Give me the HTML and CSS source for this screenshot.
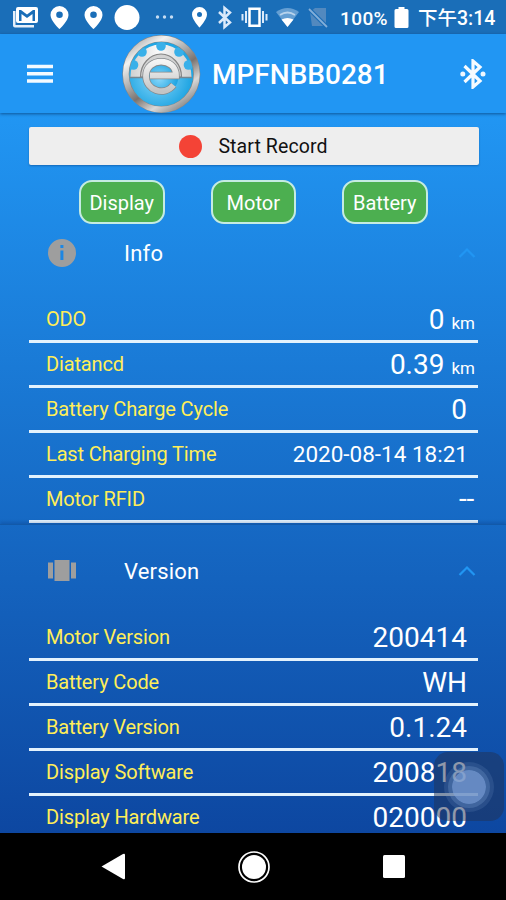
FILE: index.html
```html
<!DOCTYPE html>
<html lang="zh-Hant">
<head>
<meta charset="utf-8">
<title>MPFNBB0281</title>
<link rel="stylesheet" href="styles.css">
</head>
<body>
<div class="phone">
  <div class="status">
    <svg class="status-icons" width="330" height="34" viewBox="0 0 330 34" fill="#fff">
      <path d="M13 11h2.500v14H34v2.500H15a2 2 0 0 1-2-2z" fill="#e5effa"/>
      <path fill-rule="evenodd" d="M18 7h18q2 0 2 2v12q0 2-2 2H18q-2 0-2-2V9q0-2 2-2zm1 3v11h2.500v-7l5.500 4 5.500-4v7H35V10h-2l-6 4.500L21 10z"/>
      <path fill-rule="evenodd" d="M59.500 6a9 9 0 0 1 9 9c0 6-9 14-9 14s-9-8-9-14a9 9 0 0 1 9-9zm0 5.500a3.300 3.300 0 1 0 0 6.600 3.300 3.300 0 0 0 0-6.600z"/>
      <path fill-rule="evenodd" d="M93.500 6a9 9 0 0 1 9 9c0 6-9 14-9 14s-9-8-9-14a9 9 0 0 1 9-9zm0 5.500a3.300 3.300 0 1 0 0 6.600 3.300 3.300 0 0 0 0-6.600z"/>
      <circle cx="127" cy="17.500" r="12.500"/>
      <g fill="#c5dcf2"><circle cx="157.500" cy="17" r="1.700"/><circle cx="164.500" cy="17" r="1.700"/><circle cx="171.500" cy="17" r="1.700"/></g>
      <path fill-rule="evenodd" d="M199.500 7a7.500 7.500 0 0 1 7.500 7.500c0 5-7.500 13-7.500 13s-7.500-8-7.500-13A7.500 7.500 0 0 1 199.500 7zm0 5a2.500 2.500 0 1 0 0 5 2.500 2.500 0 0 0 0-5z"/>
      <path d="M219 12l11 10.500-5.500 4.500V8l5.500 4.500L219 23" fill="none" stroke="#dceafa" stroke-width="2.500"/>
      <path d="M249.500 8.800h10v17h-10z" fill="none" stroke="#fff" stroke-width="2.500"/>
      <path d="M246 11v12M242.500 14v6.500M263 11v12M266.500 14v6.500" stroke="#dceafa" stroke-width="2"/>
      <path d="M276 12q11.500-8 23 0L287.500 27z" fill="#659fd3"/>
      <path d="M280 15q7.500-5 15 0" fill="none" stroke="#b8d3ec" stroke-width="1.800"/>
      <path d="M281.500 19.500q6-3 12 0L287.500 27z"/>
      <path d="M310 12l5-4h11v18h-14z" fill="#5289bf"/>
      <path d="M309 9l18 18" stroke="#1b6cb5" stroke-width="4"/><path d="M309 9l18 18" stroke="#82afd9" stroke-width="1.800"/>
    </svg>
    <span class="battery-text">100%</span>
    <svg class="battery-icon" width="15" height="22" viewBox="0 0 15 22"><path d="M4.500 0h6v2H13q1.500 0 1.500 1.500v16Q14.500 21 13 21H2Q.5 21 .5 19.500v-16Q.5 2 2 2h2.500z" fill="#fff"/></svg>
    <span class="clock">下午3:14</span>
  </div>
  <header class="bar">
    <svg class="menu" width="28" height="20" viewBox="0 0 28 20"><path d="M1 2.500h26M1 9.700h26M1 17h26" stroke="#f4faff" stroke-width="3.400"/></svg>
    <svg class="logo" width="80" height="80" viewBox="0 0 80 80">
      <defs>
        <linearGradient id="rim" x1=".1" y1="0" x2=".8" y2="1"><stop offset="0" stop-color="#a5a5a5"/><stop offset=".2" stop-color="#f2f1f0"/><stop offset=".42" stop-color="#b0b0b0"/><stop offset=".6" stop-color="#7a736f"/><stop offset=".8" stop-color="#d8d8d8"/><stop offset="1" stop-color="#858585"/></linearGradient>
        <linearGradient id="metal" x1="0" y1="0" x2="0" y2="1"><stop offset="0" stop-color="#f4f4f4"/><stop offset="1" stop-color="#c4c4c4"/></linearGradient>
        <linearGradient id="gear" x1="0" y1="0" x2="1" y2="0"><stop offset="0" stop-color="#d0d0d0"/><stop offset=".45" stop-color="#fafafa"/><stop offset="1" stop-color="#cfcfcf"/></linearGradient>
        <radialGradient id="blue" cx=".45" cy=".55"><stop offset="0" stop-color="#8bd8fa"/><stop offset="1" stop-color="#22a6e3"/></radialGradient>
      </defs>
      <circle cx="39" cy="40" r="33" fill="url(#blue)"/>
      <path d="M8.500 43a30.500 32.500 0 0 1 61 0z" fill="url(#gear)"/>
      <g fill="#39b0e9">
        <circle cx="39" cy="12" r="4.800"/><circle cx="20" cy="18" r="4.800"/><circle cx="57" cy="18" r="4.800"/>
        <circle cx="11.500" cy="31" r="4.800"/><circle cx="66.500" cy="31" r="4.800"/>
      </g>
      <path d="M18.500 43a20.500 23 0 0 1 41 0z" fill="#d2d2d2" stroke="#858585" stroke-width="1.200"/>
      <path d="M8 43.500h62" stroke="#788791" stroke-width="1.400"/>
      <circle cx="39" cy="42.500" r="17.500" fill="url(#blue)"/>
      <path d="M51.500 51C42 63 24 56 24 42c0-19 30-19 30-.5H28" fill="none" stroke="#84898c" stroke-width="7.400"/>
      <path d="M51.500 51C42 63 24 56 24 42c0-19 30-19 30-.5H28" fill="none" stroke="url(#metal)" stroke-width="5.800"/>
      <circle cx="39.300" cy="40" r="35.500" fill="none" stroke="#858585" stroke-width="7"/>
      <circle cx="39.300" cy="40" r="35.500" fill="none" stroke="url(#rim)" stroke-width="5.800"/>
    </svg>
    <h1 class="title">MPFNBB0281</h1>
    <svg class="bt" width="26" height="30" viewBox="0 0 26 30"><path d="M4.500 7l15.500 15-7 6V2l7 6L4.500 23" fill="none" stroke="#f6fbff" stroke-width="3.200"/><circle cx="2.800" cy="15" r="2.500" fill="#eef7ff"/><circle cx="23" cy="15" r="2.500" fill="#eef7ff"/></svg>
  </header>
  <main class="content">
    <button class="record"><span class="dot"></span><span>Start Record</span></button>
    <div class="chips"><span class="chip">Display</span><span class="chip">Motor</span><span class="chip">Battery</span></div>
    <section class="info">
      <div class="head">
        <svg width="30" height="30" viewBox="0 0 30 30"><path fill-rule="evenodd" fill="#9e9e9e" d="M15 1a14 14 0 1 1 0 28 14 14 0 0 1 0-28zm-1.600 6v3h3V7zm0 5.500V22h3v-9.500z"/></svg>
        <h2>Info</h2>
        <svg class="chev" width="18" height="12" viewBox="0 0 18 12"><path d="M1.500 10L9 2.500l7.500 7.500" fill="none" stroke="#2196f3" stroke-width="2.200"/></svg>
      </div>
      <div class="row"><span class="label">ODO</span><span class="value unit">0<small>km</small></span></div>
      <div class="row"><span class="label">Diatancd</span><span class="value unit">0.39<small>km</small></span></div>
      <div class="row"><span class="label">Battery Charge Cycle</span><span class="value">0</span></div>
      <div class="row"><span class="label">Last Charging Time</span><span class="value date">2020-08-14 18:21</span></div>
      <div class="row"><span class="label">Motor RFID</span><span class="value none">--</span></div>
    </section>
    <section class="version">
      <div class="head">
        <svg width="30" height="30" viewBox="0 0 30 30"><path fill="#9e9e9e" d="M1 6.500h5v16H1zM7.500 4h15v21h-15zM24 6.500h5v16h-5z"/></svg>
        <h2>Version</h2>
        <svg class="chev" width="18" height="12" viewBox="0 0 18 12"><path d="M1.500 10L9 2.500l7.500 7.500" fill="none" stroke="#2196f3" stroke-width="2.200"/></svg>
      </div>
      <div class="row"><span class="label">Motor Version</span><span class="value">200414</span></div>
      <div class="row"><span class="label">Battery Code</span><span class="value">WH</span></div>
      <div class="row"><span class="label">Battery Version</span><span class="value">0.1.24</span></div>
      <div class="row"><span class="label">Display Software</span><span class="value">200818</span></div>
      <div class="row"><span class="label">Display Hardware</span><span class="value">020000</span></div>
    </section>
    <div class="assist"><span class="assist-dot"></span></div>
  </main>
  <nav class="nav">
    <svg width="28" height="30" viewBox="0 0 28 30"><path d="M2.500 14.500L24 2q2-1 2 1v23q0 2-2 1z" fill="#fff"/></svg>
    <svg width="34" height="34" viewBox="0 0 34 34"><circle cx="17" cy="17" r="15" fill="none" stroke="#fff" stroke-width="1.700"/><circle cx="17" cy="17" r="12" fill="#fff"/></svg>
    <svg width="22" height="23" viewBox="0 0 22 23"><rect width="22" height="23" rx="1.500" fill="#fff"/></svg>
  </nav>
</div>
</body>
</html>
```
FILE: styles.css
```css
* { box-sizing: border-box; }
body { margin: 0; font-family: Roboto, "Noto Sans CJK TC", sans-serif; color: #fff; }
svg { display: block; flex: none; }
.phone { width: 506px; height: 900px; display: flex; flex-direction: column; overflow: hidden; background: #000; }
.status { height: 34px; flex: none; display: flex; align-items: center; background: #1a6eb8; font-size: 19px; line-height: 34px; white-space: nowrap; }
.battery-text { width: 54px; margin-left: 10px; padding-top: 3px; font-weight: 500; letter-spacing: 0.4px; }
.battery-icon { margin-top: 1px; }
.clock { margin-left: 9px; padding-top: 3px; font-size: 19.500px; font-weight: 500; }
.bar { height: 79px; flex: none; display: flex; align-items: center; background: #2196f3; box-shadow: 0 1px 3px rgba(0, 40, 90, 0.6); position: relative; z-index: 1; }
.menu { margin-left: 26px; }
.logo { margin-left: 68px; }
.title { margin: 3px 0 0 10px; width: 248px; font-size: 28px; line-height: 36px; font-weight: 500; }
.content { height: 720px; flex: none; position: relative; overflow: hidden; background: linear-gradient(#2196f3, #0d47a1); }
.record { width: 450px; height: 38px; margin: 14px 0 0 28.500px; padding: 0; border: 0; border-radius: 2px; background: #eeeeee; color: #111; display: flex; align-items: center; justify-content: center; gap: 16px; font: 400 19.500px Roboto, sans-serif; letter-spacing: 0.1px; box-shadow: 0 1px 2px rgba(0, 50, 110, 0.4); }
.dot { width: 23px; height: 23px; border-radius: 50%; background: #f44336; }
.chips { display: flex; gap: 46px; padding: 15px 0 0 79px; }
.chip { width: 85.500px; height: 43.500px; display: flex; align-items: center; justify-content: center; border: 2px solid #c5ebe2; border-radius: 13px; background: #4caf50; font-size: 20px; padding-top: 2px; }
.info { height: 300.500px; }
.head { height: 74px; display: flex; align-items: center; padding: 0 30px 15px 47px; }
.head h2 { flex: 1; margin: 1px 0 0 47px; font-size: 22px; line-height: 30px; font-weight: 400; letter-spacing: 0.2px; }
.version { border-top: 1px solid #1259a9; box-shadow: 0 -2px 3px rgba(0, 30, 90, 0.2); }
.version .head { height: 91px; padding-bottom: 0; padding-top: 1px; }
.row { height: 45px; margin: 0 28px 0 28.500px; padding: 0 11px 0 17.500px; border-bottom: 3px solid #e3f2fd; display: flex; align-items: center; justify-content: space-between; white-space: nowrap; }
.label { color: #ffee58; font-size: 20px; letter-spacing: -0.140px; }
.value { font-size: 28px; line-height: 40px; padding-top: 3px; }
.unit { margin-right: -8px; }
.unit small { margin-left: 7px; font-size: 17px; }
.info .unit { padding-top: 5px; }
.date { font-size: 22.500px; margin-right: -1px; padding-top: 1px; }
.none { font-size: 28px; margin-right: -7px; padding-top: 0; letter-spacing: -0.200px; }
.version .value { padding-top: 1px; }
.assist { position: absolute; left: 434px; top: 639px; width: 70px; height: 69px; display: flex; align-items: center; justify-content: center; border-radius: 14px; background: rgba(34, 50, 83, 0.5); }
.assist-dot { width: 34px; height: 34px; border-radius: 50%; background: rgba(127, 163, 218, 0.75); box-shadow: 0 0 0 4px rgba(120, 155, 205, 0.3), 0 0 0 8px rgba(120, 155, 205, 0.18); }
.nav { height: 67px; flex: none; display: flex; align-items: center; justify-content: space-between; padding: 0 101px 0 99px; background: #000; }
.nav svg:nth-child(2) { margin-left: -3px; }
```
